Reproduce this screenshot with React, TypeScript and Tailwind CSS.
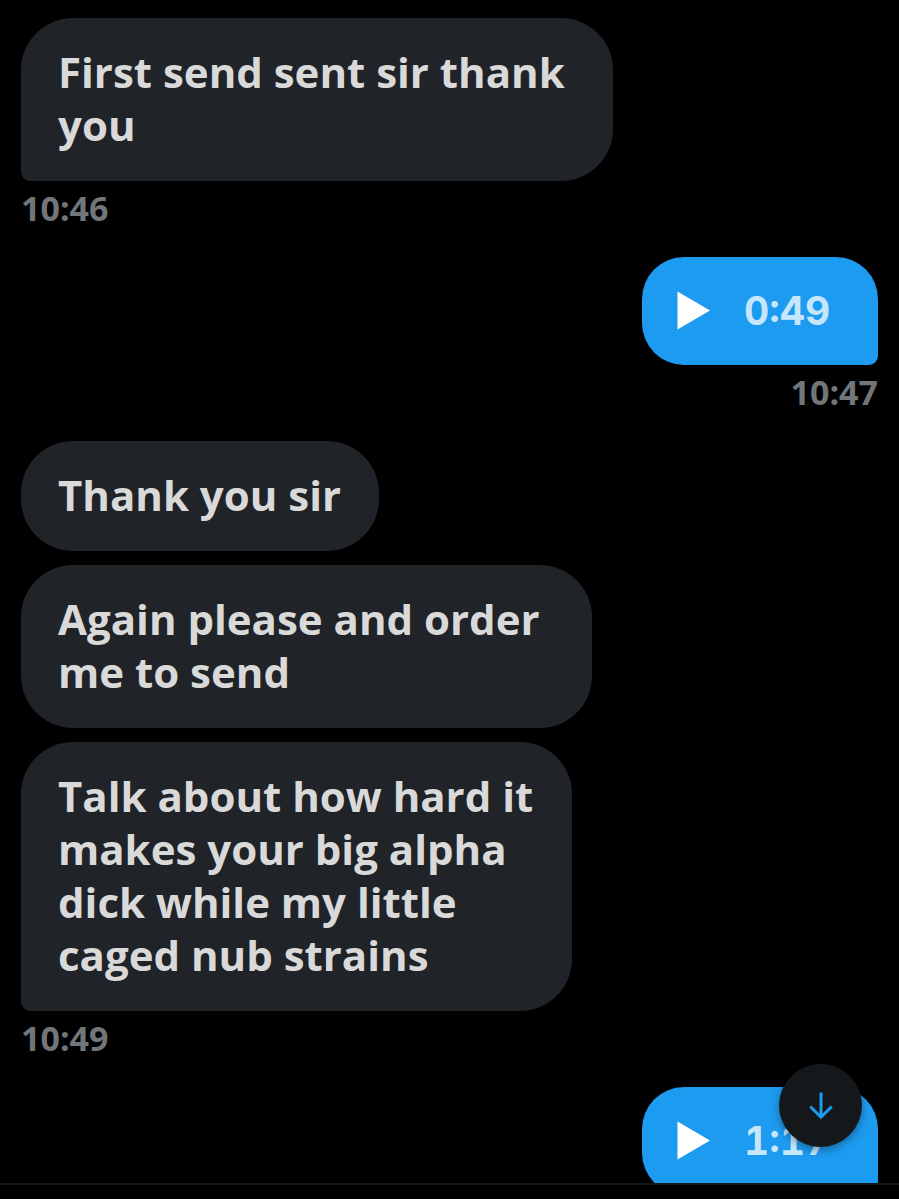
import type { ReactNode } from 'react';

type BubbleProps = { children: ReactNode; width?: string; last?: boolean };

function TextBubble({ children, width = '', last = false }: BubbleProps) {
  return (
    <p
      className={`w-fit rounded-[52px] bg-[#202327] pt-[27px] pr-[38px] pb-[30px] pl-[37px] text-[42px] leading-[53px] font-bold text-[#d9d9d9] ${width} ${last ? 'rounded-bl-[9px]' : ''}`}
    >
      {children}
    </p>
  );
}

function AudioBubble({ duration }: { duration: string }) {
  return (
    <button
      type="button"
      aria-label={`Play voice message, ${duration}`}
      className="flex h-[108px] w-[236px] shrink-0 items-center gap-[34px] self-end rounded-[42px] rounded-br-[9px] bg-[#1d9bf0] pl-[35px] font-[Inter,sans-serif] text-[39px] leading-[48px] font-bold text-[#c7e6fb] tabular-nums"
    >
      <svg viewBox="0 0 33 40" className="h-[40px] w-[33px] fill-white" aria-hidden="true">
        <path d="M0.5 0.5 L33 19.5 L0.5 38.5 Z" />
      </svg>
      <span>{duration}</span>
    </button>
  );
}

function Time({ children, own = false }: { children: string; own?: boolean }) {
  return (
    <time
      className={`mt-[7px] mb-[29px] block text-[34px] leading-[40px] font-bold text-[#71767b] ${own ? 'self-end' : 'self-start'}`}
    >
      {children}
    </time>
  );
}

export default function App() {
  return (
    <main className="relative flex h-screen flex-col bg-black font-['Open_Sans',sans-serif]">
      <section
        aria-label="Conversation"
        className="flex min-h-0 flex-1 flex-col overflow-hidden px-[21px] pt-[18px]"
      >
        <TextBubble width="max-w-[592px]" last>
          First send sent sir thank you
        </TextBubble>
        <Time>10:46</Time>

        <AudioBubble duration="0:49" />
        <Time own>10:47</Time>

        <div className="flex flex-col gap-[14px]">
          <TextBubble>Thank you sir</TextBubble>
          <TextBubble width="max-w-[571px]">Again please and order me to send</TextBubble>
          <TextBubble width="max-w-[551px]" last>
            Talk about how hard it makes your big alpha dick while my little caged nub strains
          </TextBubble>
        </div>
        <Time>10:49</Time>

        <AudioBubble duration="1:17" />
      </section>

      <footer className="h-[16px] shrink-0 border-t-2 border-[#16181a] bg-black" />

      <button
        type="button"
        aria-label="Scroll to latest message"
        className="absolute right-[37px] bottom-[52px] flex size-[83px] items-center justify-center rounded-full border border-[#181b1e] bg-[#15181a] shadow-[0_3px_8px_rgba(0,0,0,0.35)]"
      >
        <svg
          viewBox="0 0 24 28"
          className="h-[28px] w-[24px] fill-none stroke-[#1d9bf0] stroke-3"
          aria-hidden="true"
        >
          <path d="M12 0.5 V25 M1.3 14.5 L12 25.2 L22.7 14.5" />
        </svg>
      </button>
    </main>
  );
}
